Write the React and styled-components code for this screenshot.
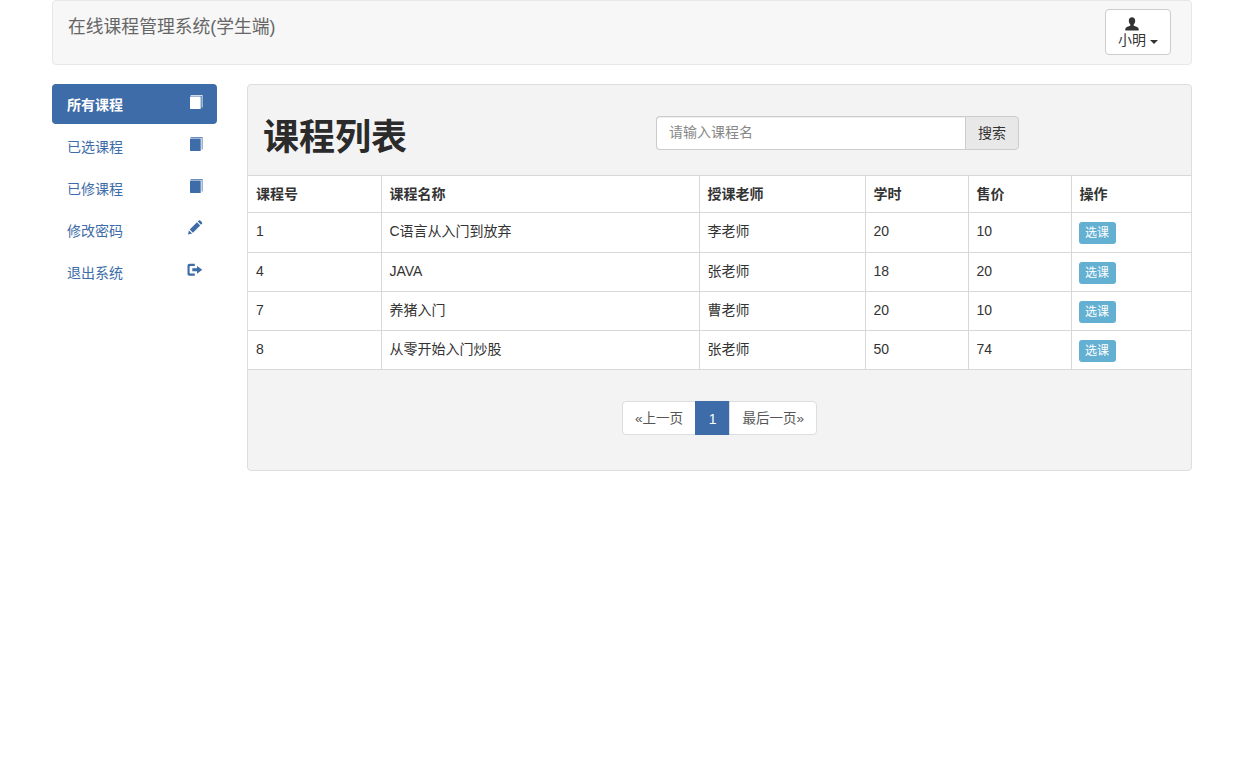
import React from "react";
import styled, { createGlobalStyle } from "styled-components";

const FONT = `"Liberation Sans", "Noto Sans CJK SC", sans-serif`;

const courses = [
  { id: 1, name: "C语言从入门到放弃", teacher: "李老师", hours: 20, price: 10 },
  { id: 4, name: "JAVA", teacher: "张老师", hours: 18, price: 20 },
  { id: 7, name: "养猪入门", teacher: "曹老师", hours: 20, price: 10 },
  { id: 8, name: "从零开始入门炒股", teacher: "张老师", hours: 50, price: 74 },
];

const BookIcon = () => (
  <svg width="14" height="14" viewBox="0 0 14 14" fill="currentColor">
    <path d="M2 0h11.500v12.500h-.8V.8H2.300C1.900.8 1.500 1 1.300 1.300 1.500 1 1.600 .4 2 0z" />
    <path d="M1 2.200C1 1.700 1.500 1.500 2 1.500h9.700V14H2c-.6 0-1-.4-1-1z" />
  </svg>
);

const PencilIcon = () => (
  <svg width="16" height="15" viewBox="0 0 16 15" fill="currentColor">
    <path d="M1 14.500l.9-4.100 3.200 3.200zM2.700 9.600L10 2.300l3.200 3.200-7.300 7.300zM10.800 1.500l1-1c.4-.4 1-.4 1.400 0l1.800 1.800c.4.4.4 1 0 1.400l-1 1z" />
  </svg>
);

const LogoutIcon = () => (
  <svg width="16" height="14" viewBox="0 0 16 14" fill="currentColor">
    <path d="M2.600.8h5.200v2.100H3.400c-.5 0-.8.3-.8.8v6.100c0 .5.300.8.8.8h4.400v2.100H2.600C1.300 12.800.5 12 .5 10.700V2.900C.5 1.600 1.300.8 2.600.8z" />
    <path d="M10 2.900l5.300 3.900L10 10.700V8.300H5.300V5.300H10z" />
  </svg>
);

const UserIcon = () => (
  <svg width="14" height="14" viewBox="0 0 14 14" fill="currentColor">
    <path d="M7 .3c2 0 3.200 1.500 3.200 3.500 0 1.500-.6 2.800-1.500 3.600v1.300c1.800.6 4.300 1.400 4.800 2.500.2.600.2 1.500.2 2.300H.3c0-.8 0-1.700.2-2.300.5-1.100 3-1.900 4.800-2.500V7.400C4.400 6.600 3.800 5.300 3.800 3.800 3.800 1.800 5 .3 7 .3z" />
  </svg>
);

const navItems = [
  { label: "所有课程", icon: <BookIcon />, active: true },
  { label: "已选课程", icon: <BookIcon /> },
  { label: "已修课程", icon: <BookIcon /> },
  { label: "修改密码", icon: <PencilIcon /> },
  { label: "退出系统", icon: <LogoutIcon /> },
];

const GlobalStyle = createGlobalStyle`
  * { box-sizing: border-box; }
  html, body { margin: 0; padding: 0; background: #fff; }
  body {
    font-family: ${FONT};
    font-size: 14px;
    line-height: 20px;
    color: #333;
  }
`;

const Page = styled.div`
  width: 1140px;
  margin-left: 52px;
`;

const Navbar = styled.header`
  display: flex;
  justify-content: space-between;
  height: 65px;
  padding: 8px 20px 0 15px;
  background: #f7f7f7;
  border: 1px solid #e7e7e7;
  border-radius: 4px;
`;

const Brand = styled.div`
  font-size: 17.8px;
  line-height: 20px;
  margin-top: 8px;
  color: #666;
`;

const UserButton = styled.button`
  display: flex;
  flex-direction: column;
  align-items: center;
  width: 66px;
  height: 46px;
  padding: 7px 0 0;
  background: #fff;
  border: 1px solid #ccc;
  border-radius: 4px;
  color: #333;
  font-family: ${FONT};
  font-size: 14px;
  line-height: 17px;

  svg {
    display: block;
    flex: none;
    margin-right: 12px;
  }

  span {
    margin-top: 1px;
  }
`;

const Caret = styled.span`
  display: inline-block;
  width: 0;
  height: 0;
  margin-left: 4px;
  vertical-align: middle;
  border-top: 4px solid #333;
  border-left: 4px solid transparent;
  border-right: 4px solid transparent;
`;

const Columns = styled.div`
  display: flex;
  gap: 30px;
  margin-top: 19px;
  align-items: flex-start;
`;

const Sidebar = styled.nav`
  display: flex;
  flex-direction: column;
  gap: 2px;
  width: 165px;
  flex: none;
`;

const NavLink = styled.a`
  display: flex;
  align-items: center;
  justify-content: space-between;
  height: 40px;
  padding: 1px 14px 0 15px;
  border-radius: 4px;
  font-size: 14px;
  font-weight: ${(p) => (p.$active ? 700 : 400)};
  color: ${(p) => (p.$active ? "#fff" : "#3d6ca8")};
  background: ${(p) => (p.$active ? "#3d6ca8" : "transparent")};

  svg {
    display: block;
    margin-top: -6px;
  }
`;

const Panel = styled.main`
  width: 945px;
  height: 387px;
  background: #f3f3f3;
  border: 1px solid #ddd;
  border-radius: 4px;
  overflow: hidden;
`;

const PanelHead = styled.div`
  display: flex;
  height: 90px;
  padding-left: 15px;
`;

const Title = styled.h1`
  width: 393px;
  margin: 31px 0 0;
  font-size: 36px;
  line-height: 44px;
  font-weight: 700;
  color: #2b2b2b;
`;

const SearchGroup = styled.form`
  display: flex;
  height: 34px;
  margin-top: 31px;
`;

const SearchInput = styled.input`
  width: 309px;
  height: 34px;
  padding: 5px 12px 7px;
  border: 1px solid #ccc;
  border-right: 0;
  border-radius: 4px 0 0 4px;
  box-shadow: inset 0 1px 1px rgba(0, 0, 0, 0.075);
  font-family: ${FONT};
  font-size: 14px;
  color: #555;
  outline: none;

  &::placeholder {
    color: #888;
    opacity: 1;
  }
`;

const SearchButton = styled.button`
  width: 54px;
  height: 34px;
  padding: 0 0 2px;
  background: #e8e8e8;
  border: 1px solid #ccc;
  border-radius: 0 4px 4px 0;
  font-family: ${FONT};
  font-size: 14px;
  color: #333;
`;

const Table = styled.table`
  width: 100%;
  table-layout: fixed;
  border-collapse: collapse;
  background: #fff;

  tbody tr:first-child td {
    height: 40px;
    padding-bottom: 3px;
  }
`;

const Th = styled.th`
  width: ${(p) => p.$w}px;
  height: 37px;
  padding: 0 8px;
  text-align: left;
  font-size: 14px;
  font-weight: 700;
  color: #333;
  border: 1px solid #d8d8d8;
  border-left: ${(p) => (p.$first ? 0 : "1px solid #d8d8d8")};
  border-right: ${(p) => (p.$last ? 0 : "1px solid #d8d8d8")};
`;

const Td = styled.td`
  height: 39px;
  padding: 0 8px 2px;
  font-size: 14px;
  color: #333;
  border: 1px solid #d8d8d8;
  border-left: ${(p) => (p.$first ? 0 : "1px solid #d8d8d8")};
  border-right: ${(p) => (p.$last ? 0 : "1px solid #d8d8d8")};
`;

const EnrollButton = styled.button`
  display: block;
  width: 37px;
  height: 22px;
  margin: 3px 0 0 -1px;
  padding: 0;
  background: #64b0d2;
  border: 0;
  border-radius: 3px;
  color: #fff;
  font-family: ${FONT};
  font-size: 12px;
  line-height: 22px;
`;

const Pagination = styled.ul`
  display: flex;
  justify-content: center;
  list-style: none;
  margin: 31px 0 0 1px;
  padding: 0;
`;

const PageLink = styled.li`
  height: 34px;
  padding: 0 ${(p) => (p.$current ? "12.800px" : "12px")};
  line-height: 34px;
  margin-left: -1px;
  font-size: ${(p) => (p.$current ? "14px" : "13.500px")};
  color: ${(p) => (p.$current ? "#fff" : "#555")};
  background: ${(p) => (p.$current ? "#3d6ca8" : "#fff")};
  border: 1px solid ${(p) => (p.$current ? "#3d6ca8" : "#ddd")};

  &:first-child {
    border-radius: 4px 0 0 4px;
  }
  &:last-child {
    border-radius: 0 4px 4px 0;
  }
`;

const columns = [
  { label: "课程号", w: 133 },
  { label: "课程名称", w: 318 },
  { label: "授课老师", w: 166 },
  { label: "学时", w: 103 },
  { label: "售价", w: 103 },
  { label: "操作", w: 120 },
];

export default function App() {
  return (
    <Page>
      <GlobalStyle />
      <Navbar>
        <Brand>在线课程管理系统(学生端)</Brand>
        <UserButton type="button">
          <UserIcon />
          <span>
            小明
            <Caret />
          </span>
        </UserButton>
      </Navbar>
      <Columns>
        <Sidebar>
          {navItems.map((item) => (
            <NavLink key={item.label} $active={item.active}>
              {item.label}
              {item.icon}
            </NavLink>
          ))}
        </Sidebar>
        <Panel>
          <PanelHead>
            <Title>课程列表</Title>
            <SearchGroup>
              <SearchInput placeholder="请输入课程名" />
              <SearchButton type="button">搜索</SearchButton>
            </SearchGroup>
          </PanelHead>
          <Table>
            <thead>
              <tr>
                {columns.map((c, i) => (
                  <Th key={c.label} $w={c.w} $first={i === 0} $last={i === 5}>
                    {c.label}
                  </Th>
                ))}
              </tr>
            </thead>
            <tbody>
              {courses.map((c) => (
                <tr key={c.id}>
                  <Td $first>{c.id}</Td>
                  <Td>{c.name}</Td>
                  <Td>{c.teacher}</Td>
                  <Td>{c.hours}</Td>
                  <Td>{c.price}</Td>
                  <Td $last>
                    <EnrollButton type="button">选课</EnrollButton>
                  </Td>
                </tr>
              ))}
            </tbody>
          </Table>
          <Pagination>
            <PageLink>«上一页</PageLink>
            <PageLink $current>1</PageLink>
            <PageLink>最后一页»</PageLink>
          </Pagination>
        </Panel>
      </Columns>
    </Page>
  );
}
